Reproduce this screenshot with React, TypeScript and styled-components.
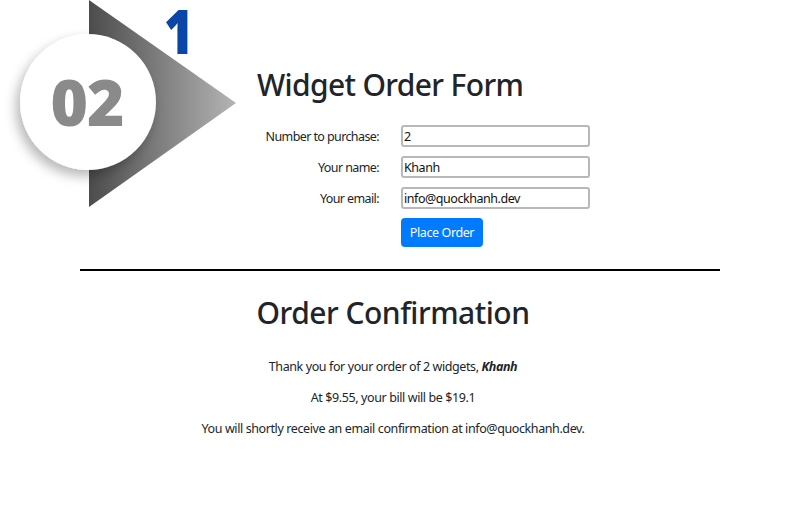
import React from "react";
import styled, { createGlobalStyle } from "styled-components";

const Global = createGlobalStyle`
  html, body { margin: 0; padding: 0; background: #ffffff; }
  body {
    font-family: "Noto Sans", "Open Sans", "Liberation Sans", sans-serif;
    color: #212529;
  }
  * { box-sizing: border-box; }
`;

const Page = styled.div`
  position: relative;
  width: 800px;
  height: 522px;
  overflow: hidden;
  background: #fff;
`;

const Badge = styled.svg`
  position: absolute;
  left: 0;
  top: 0;
`;

const StepNumber = styled.span`
  position: absolute;
  left: 164px;
  top: 5px;
  height: 50px;
  font-family: "Open Sans", sans-serif;
  font-weight: 800;
  font-size: 62px;
  line-height: 50px;
  color: #0a46a8;
  transform: scaleX(0.82);
  transform-origin: left center;
`;

const Container = styled.main`
  width: 640px;
  margin: 0 auto;
  padding-top: 67px;
  display: flex;
  flex-direction: column;
`;

const FormSection = styled.section`
  padding-left: 177px;
  display: flex;
  flex-direction: column;
`;

const Title = styled.h1`
  margin: 0;
  font-size: 30px;
  font-weight: 500;
  line-height: 36px;
  letter-spacing: -0.65px;
`;

const FormGrid = styled.form`
  margin-top: 22px;
  display: grid;
  grid-template-columns: 122px 189px;
  column-gap: 22px;
  row-gap: 9px;
  align-items: center;
`;

const Label = styled.label`
  font-size: 12.5px;
  text-align: right;
  white-space: nowrap;
  letter-spacing: -0.6px;
`;

const Input = styled.input`
  width: 189px;
  height: 22px;
  border: 2px solid #b8b8b8;
  border-radius: 3px;
  padding: 0 1px;
  font-family: inherit;
  font-size: 12.5px;
  color: #111;
  letter-spacing: -0.45px;
  background: #fff;
`;

const Button = styled.button`
  grid-column: 2;
  justify-self: start;
  width: 82px;
  height: 29px;
  border: none;
  border-radius: 4px;
  background: #007bff;
  color: #fff;
  font-family: inherit;
  font-size: 12.5px;
  letter-spacing: -0.4px;
  padding: 0;
`;

const Divider = styled.hr`
  margin: 22px 0 0;
  border: none;
  height: 2px;
  background: #000;
`;

const Confirmation = styled.section`
  padding-right: 14px;
  padding-top: 24px;
  display: flex;
  flex-direction: column;
  align-items: center;
`;

const SubTitle = styled.h2`
  margin: 0 0 26px;
  font-size: 30px;
  font-weight: 500;
  line-height: 36px;
  letter-spacing: -0.5px;
`;

const Text = styled.p`
  margin: 0 0 12px;
  font-size: 12.5px;
  line-height: 19px;
  letter-spacing: -0.4px;
  text-align: center;
`;

export default function App() {
  return (
    <Page>
      <Global />
      <Container>
        <FormSection>
          <Title>Widget Order Form</Title>
          <FormGrid onSubmit={(e) => e.preventDefault()}>
            <Label>Number to purchase:</Label>
            <Input defaultValue="2" />
            <Label>Your name:</Label>
            <Input defaultValue="Khanh" />
            <Label>Your email:</Label>
            <Input defaultValue="info@quockhanh.dev" />
            <Button type="submit">Place Order</Button>
          </FormGrid>
        </FormSection>
        <Divider />
        <Confirmation>
          <SubTitle>Order Confirmation</SubTitle>
          <Text>
            Thank you for your order of 2 widgets, <b><i>Khanh</i></b>
          </Text>
          <Text>At $9.55, your bill will be $19.1</Text>
          <Text>You will shortly receive an email confirmation at info@quockhanh.dev.</Text>
        </Confirmation>
      </Container>
      <Badge width="250" height="215" viewBox="0 0 250 215">
        <defs>
          <linearGradient id="tri" x1="0" y1="0" x2="1" y2="0">
            <stop offset="0" stopColor="#4c4c4c" />
            <stop offset="1" stopColor="#b4b4b4" />
          </linearGradient>
          <filter id="sh" x="-30%" y="-30%" width="160%" height="160%">
            <feDropShadow dx="-4" dy="6" stdDeviation="6" floodColor="#000" floodOpacity="0.28" />
          </filter>
        </defs>
        <polygon points="89,0 236,103 89,207" fill="url(#tri)" />
        <circle cx="88" cy="102" r="68" fill="#fff" filter="url(#sh)" />
        <text
          x="87"
          y="126"
          textAnchor="middle"
          fontFamily="'Open Sans', sans-serif"
          fontWeight="800"
          fontSize="64"
          fill="#8a8a8a"
          letterSpacing="-1"
        >
          02
        </text>
      </Badge>
      <StepNumber>1</StepNumber>
    </Page>
  );
}
